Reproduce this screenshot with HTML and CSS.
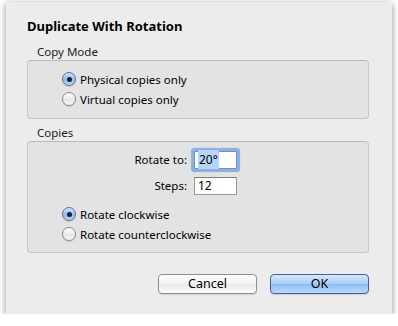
FILE: index.html
```html
<!DOCTYPE html>
<html>
<head>
<meta charset="utf-8">
<link rel="stylesheet" href="styles.css">
</head>
<body>
<div class="window">
  <div class="title">Duplicate With Rotation</div>

  <div class="group-label">Copy Mode</div>
  <div class="group group-mode">
    <div class="radio-row"><span class="radio on"></span><span>Physical copies only</span></div>
    <div class="radio-row"><span class="radio"></span><span>Virtual copies only</span></div>
  </div>

  <div class="group-label">Copies</div>
  <div class="group group-copies">
    <div class="fields">
      <span class="field-label">Rotate to:</span>
      <span class="input focused"><span class="sel">20°</span></span>
      <span class="field-label">Steps:</span>
      <span class="input">12</span>
    </div>
    <div class="radios">
      <div class="radio-row"><span class="radio on"></span><span>Rotate clockwise</span></div>
      <div class="radio-row"><span class="radio"></span><span>Rotate counterclockwise</span></div>
    </div>
  </div>

  <div class="buttons">
    <div class="button">Cancel</div>
    <div class="button default">OK</div>
  </div>
</div>
</body>
</html>
```

FILE: styles.css
```css
html, body {
  margin: 0;
  padding: 0;
  background: #ffffff;
}
body {
  font-family: "Noto Sans", "DejaVu Sans", sans-serif;
  font-size: 11.5px;
  color: #000;
}
.window {
  margin: 2px 0 0 6px;
  width: 386px;
  height: 312px;
  box-sizing: border-box;
  background: #ececec;
  box-shadow: 0 2px 7px rgba(0, 0, 0, 0.45);
  padding: 16px 23px 0 21px;
  display: flex;
  flex-direction: column;
}
.title {
  font-weight: bold;
  font-size: 13px;
  line-height: 16px;
  height: 16px;
}
.group-label {
  line-height: 14px;
  height: 14px;
  margin-left: 10px;
  margin-bottom: 1px;
  color: #1a1a1a;
}
.title + .group-label {
  margin-top: 11px;
}
.group {
  background: #e3e3e3;
  border: 1px solid #c6c6c6;
  border-top-color: #b9b9b9;
  border-radius: 4px;
}
.group-mode {
  padding: 8px 0 9px 34px;
  margin-bottom: 7px;
}
.group-copies {
  padding: 9px 0 8px 34px;
}
.radio-row {
  display: flex;
  align-items: center;
  gap: 4px;
  height: 20px;
}
.radio {
  width: 14px;
  height: 14px;
  box-sizing: border-box;
  border-radius: 50%;
  border: 1px solid #8a8a8a;
  background: linear-gradient(#ffffff, #e8e8e8 60%, #f6f6f6);
  box-shadow: 0 1px 1px rgba(0, 0, 0, 0.12);
  display: flex;
  align-items: center;
  justify-content: center;
  flex: none;
}
.radio.on {
  border-color: #5e6f93;
  background: linear-gradient(#cfe3fa, #8fbdf0 55%, #b7d7fa);
}
.radio.on::after {
  content: "";
  width: 5px;
  height: 5px;
  border-radius: 50%;
  background: #1c1c2a;
}
.fields {
  display: grid;
  grid-template-columns: 125px 43px;
  column-gap: 7px;
  row-gap: 8px;
  align-items: center;
}
.field-label {
  text-align: right;
  line-height: 18px;
}
.input {
  height: 18px;
  box-sizing: border-box;
  background: #fff;
  border: 1px solid #9b9b9b;
  border-top-color: #7d7d7d;
  padding-left: 3px;
  line-height: 16px;
  font-size: 12px;
}
.input.focused {
  border-color: #6d8fc4;
  box-shadow: 0 0 0 1px #8fb2e3, 0 0 1px 3px rgba(110, 155, 220, 0.75);
  border-radius: 1px;
}
.sel {
  background: #b5d5fb;
  padding: 1px 1px;
}
.radios {
  margin-top: 9px;
}
.buttons {
  margin-top: 21px;
  display: flex;
  justify-content: flex-end;
  gap: 13px;
}
.button {
  width: 99px;
  height: 20px;
  box-sizing: border-box;
  border: 1px solid #8f8f8f;
  border-radius: 4px;
  background: linear-gradient(#ffffff, #f4f4f4 50%, #e9e9e9 51%, #fbfbfb);
  box-shadow: 0 1px 1px rgba(0, 0, 0, 0.12);
  text-align: center;
  line-height: 18px;
  font-size: 12.5px;
}
.button.default {
  border-color: #4c5c92;
  background: linear-gradient(#d5e8fc, #a8cdf6 50%, #8bbdf3 51%, #b9dafc);
}
```
